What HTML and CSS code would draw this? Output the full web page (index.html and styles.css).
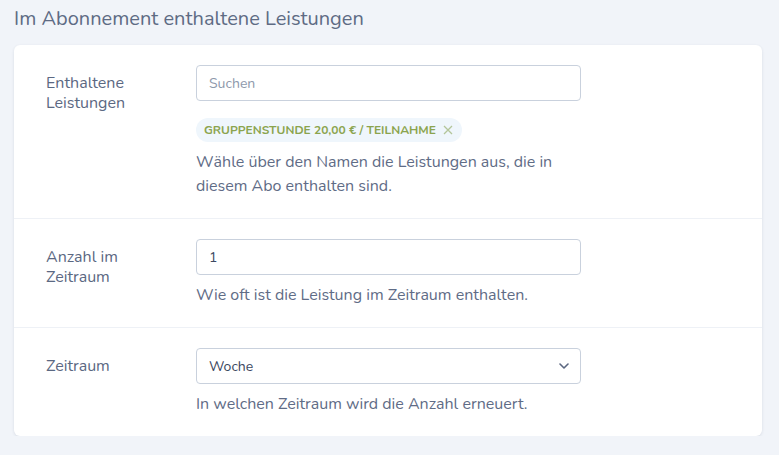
FILE: index.html
```html
<!DOCTYPE html>
<html lang="de">
<head>
<meta charset="utf-8">
<link rel="stylesheet" href="styles.css">
</head>
<body>
<h2 class="section-title">Im Abonnement enthaltene Leistungen</h2>
<div class="card">
  <div class="row">
    <div class="label">Enthaltene Leistungen</div>
    <div class="field">
      <div class="input placeholder">Suchen</div>
      <div class="tags">
        <span class="tag">GRUPPENSTUNDE 20,00 € / TEILNAHME
          <svg class="tag-x" width="10" height="10" viewBox="0 0 10 10"><path d="M1 1L9 9M9 1L1 9" stroke="currentColor" stroke-width="1.3" fill="none"/></svg>
        </span>
      </div>
      <p class="help">Wähle über den Namen die Leistungen aus, die in diesem Abo enthalten sind.</p>
    </div>
  </div>
  <div class="row">
    <div class="label">Anzahl im Zeitraum</div>
    <div class="field">
      <div class="input">1</div>
      <p class="help">Wie oft ist die Leistung im Zeitraum enthalten.</p>
    </div>
  </div>
  <div class="row">
    <div class="label">Zeitraum</div>
    <div class="field">
      <div class="input select">Woche
        <svg class="chev" width="10" height="6" viewBox="0 0 10 6"><path d="M1 1L5 5L9 1" stroke="currentColor" stroke-width="1.6" fill="none" stroke-linecap="round" stroke-linejoin="round"/></svg>
      </div>
      <p class="help">In welchen Zeitraum wird die Anzahl erneuert.</p>
    </div>
  </div>
</div>
</body>
</html>
```
FILE: styles.css
```css
html, body {
  margin: 0;
  padding: 0;
  background: #f1f4f9;
}
body {
  font-family: "Nunito", "Lato", "Open Sans", sans-serif;
  color: #5b6780;
  padding: 0 17px 0 14px;
}
.section-title {
  margin: 0;
  padding-top: 7px;
  height: 45px;
  box-sizing: border-box;
  font-size: 20px;
  font-weight: 400;
  color: #5e6b84;
  line-height: 24px;
}
.card {
  background: #fff;
  border-radius: 6px;
  box-shadow: 0 1px 3px rgba(40, 55, 90, 0.12);
}
.row {
  display: flex;
  padding: 20px 32px 20px 32px;
  border-top: 1px solid #eef1f6;
}
.row:first-child {
  border-top: none;
}
.label {
  width: 120px;
  margin-right: 30px;
  flex: none;
  padding-top: 8px;
  font-size: 16px;
  line-height: 20px;
  color: #5b6882;
}
.field {
  width: 385px;
}
.input {
  height: 36px;
  box-sizing: border-box;
  border: 1px solid #c9d1dd;
  border-radius: 4px;
  padding: 0 12px;
  display: flex;
  align-items: center;
  font-size: 14px;
  color: #3c4860;
}
.input.placeholder {
  color: #8e99ab;
}
.select {
  justify-content: space-between;
}
.chev {
  color: #5b6780;
  margin-right: -1px;
}
.tags {
  margin-top: 17px;
  display: flex;
}
.tag {
  display: inline-flex;
  align-items: center;
  height: 24px;
  padding: 0 9px 0 8px;
  border-radius: 12px;
  background: #eff6fc;
  color: #8ba44e;
  font-size: 12px;
  font-weight: 700;
}
.tag-x {
  margin-left: 7px;
  color: #b3c59a;
}
.help {
  margin: 8px 0 0;
  font-size: 16px;
  line-height: 24px;
  color: #5f6c86;
}
```
